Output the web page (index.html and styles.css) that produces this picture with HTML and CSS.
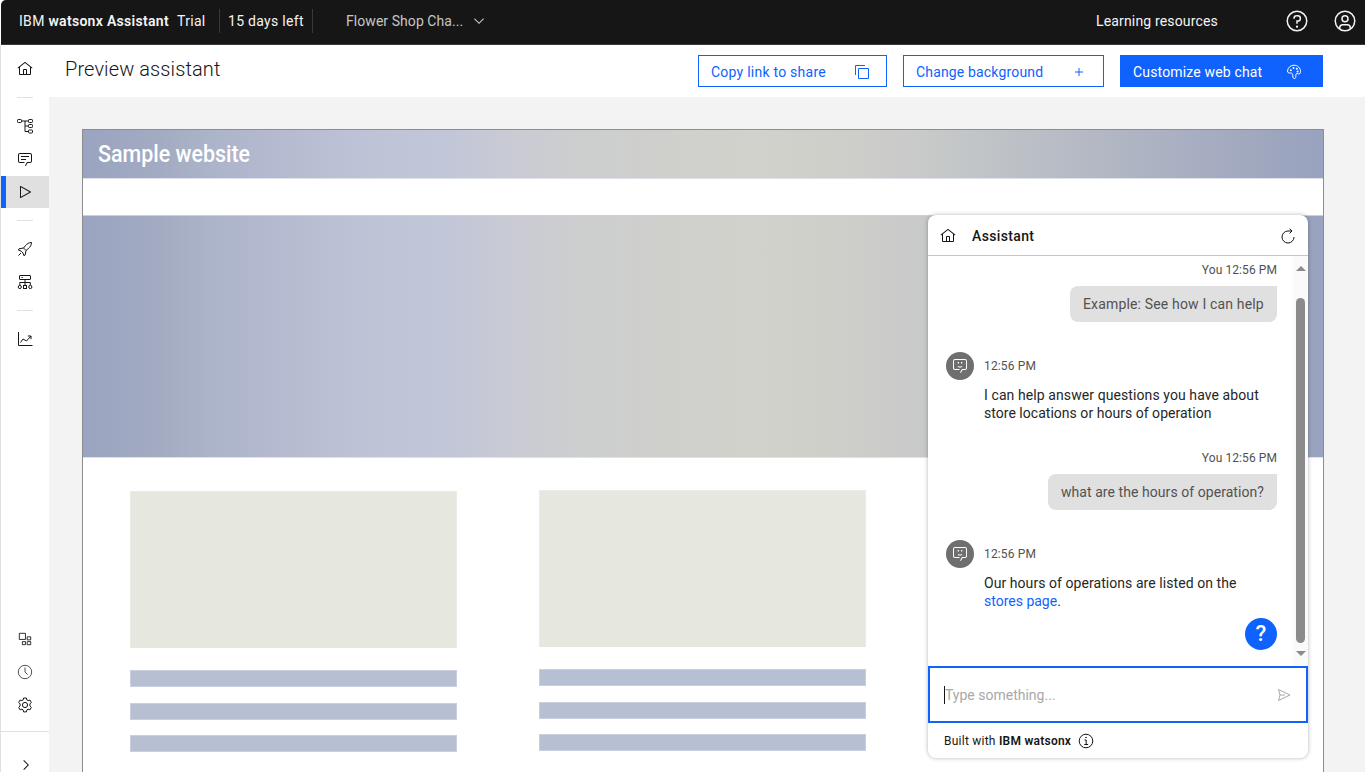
FILE: index.html
```html
<!DOCTYPE html>
<html lang="en">
<head>
<meta charset="utf-8">
<title>Preview assistant</title>
<link rel="stylesheet" href="styles.css">
</head>
<body>
<svg class="defs" width="0" height="0">
  <symbol id="home" viewBox="0 0 32 32"><path d="M16.6 2.2a1 1 0 0 0-1.2 0L1 13.4 2.2 15 4 13.6V26a2 2 0 0 0 2 2h20a2 2 0 0 0 2-2V13.6l1.8 1.4 1.2-1.6ZM18 26h-4v-8h4Zm2 0v-8a2 2 0 0 0-2-2h-4a2 2 0 0 0-2 2v8H6V12l10-7.8L26 12v14Z"/></symbol>
  <symbol id="bot" viewBox="0 0 32 32"><path d="M16 19a7 7 0 0 1-4.5-1.7l1.3-1.5a5 5 0 0 0 6.4 0l1.3 1.5A7 7 0 0 1 16 19Z"/><path d="M20.500 8H18v3h2.500V8Zm-9 0v3H14V8Z"/><path d="m17.7 30-1.7-1 4-7h6a2 2 0 0 0 2-2V6a2 2 0 0 0-2-2H6a2 2 0 0 0-2 2v14a2 2 0 0 0 2 2h9v2H6a4 4 0 0 1-4-4V6a4 4 0 0 1 4-4h20a4 4 0 0 1 4 4v14a4 4 0 0 1-4 4h-4.8Z"/></symbol>
</svg>
<header class="topbar">
  <span class="brand">IBM <b>watsonx Assistant</b></span>
  <span class="plan">Trial</span>
  <span class="days">15 days left</span>
  <span class="shop">Flower Shop Cha...</span>
  <svg class="chev" viewBox="0 0 16 16"><path d="M8 11 3 6l.7-.7L8 9.6l4.300-4.300.7.7z"/></svg>
  <span class="learn"><span>Learning resources</span></span>
  <svg class="topicon help" viewBox="0 0 32 32"><path d="M16 2a14 14 0 1 0 14 14A14 14 0 0 0 16 2Zm0 26a12 12 0 1 1 12-12 12 12 0 0 1-12 12Z"/><circle cx="16" cy="23.500" r="1.500"/><path d="M17 8h-1.500A4.500 4.500 0 0 0 11 12.500v.5h2v-.5a2.500 2.500 0 0 1 2.500-2.500H17a2.500 2.500 0 0 1 0 5h-2v4.500h2V17a4.500 4.500 0 0 0 0-9Z"/></svg>
  <svg class="topicon" viewBox="0 0 32 32"><path d="M16 8a5 5 0 1 0 5 5 5 5 0 0 0-5-5Zm0 8a3 3 0 1 1 3-3 3 3 0 0 1-3 3Z"/><path d="M16 2a14 14 0 1 0 14 14A14 14 0 0 0 16 2Zm-6 24.400V25a3 3 0 0 1 3-3h6a3 3 0 0 1 3 3v1.400a11.900 11.900 0 0 1-12 0Zm14-1.500A5 5 0 0 0 19 20h-6a5 5 0 0 0-5 4.900 12 12 0 1 1 16 0Z"/></svg>
</header>
<div class="shell">
  <nav class="rail">
    <a class="nav home"><svg viewBox="0 0 32 32"><use href="#home"/></svg></a>
    <i class="sep s1"></i>
    <a class="nav"><svg class="line" viewBox="0 0 16 16"><rect x=".5" y="1.500" width="4" height="3" rx=".8"/><rect x="11.500" y="1.500" width="4" height="3" rx=".8"/><rect x="11.500" y="6.500" width="4" height="3" rx=".8"/><rect x="11.500" y="12" width="4" height="3" rx=".8"/><path d="M4.500 3h7M8 3v10.500h3.500M8 8h3.500"/></svg></a>
    <a class="nav"><svg viewBox="0 0 32 32"><path d="M17.700 30 16 29l4-7h6a2 2 0 0 0 2-2V8a2 2 0 0 0-2-2H6a2 2 0 0 0-2 2v12a2 2 0 0 0 2 2h9v2H6a4 4 0 0 1-4-4V8a4 4 0 0 1 4-4h20a4 4 0 0 1 4 4v12a4 4 0 0 1-4 4h-4.800Z"/><path d="M8 10h16v2H8Zm0 6h10v2H8Z"/></svg></a>
    <a class="nav active"><svg viewBox="0 0 32 32"><path d="M7 28a1 1 0 0 1-1-1V5a1 1 0 0 1 1.500-.9l20 11a1 1 0 0 1 0 1.800l-20 11A1 1 0 0 1 7 28ZM8 6.700v18.600L24.900 16Z"/></svg></a>
    <i class="sep s2"></i>
    <a class="nav"><svg class="line" viewBox="0 0 16 16"><path d="M14.500 1.500c-2.500 0-4.500 1.200-6.200 3.300L6.500 7 2 7.800 1.300 9l3 1.200L6 12l.9 2.700 1.300-.7.8-4.500 2.200-1.800c2.100-1.700 3.300-3.700 3.300-6.200ZM6.500 7 9 9.500M4 12l-2.500 2.500"/></svg></a>
    <a class="nav"><svg class="line" viewBox="0 0 16 16"><rect x="2.500" y="1.500" width="11" height="4" rx=".5"/><path d="M4.500 3.500h1.300M8 5.500V11M2.800 11V8.500h10.500V11"/><circle cx="2.800" cy="13" r="1.600"/><rect x="6.500" y="11.500" width="3" height="3"/><circle cx="13.300" cy="13" r="1.600"/></svg></a>
    <i class="sep s3"></i>
    <a class="nav"><svg class="line" viewBox="0 0 16 16"><path d="M1.500 1v13.500h14M3.500 11.500 6 8l3.500 2L14 5M10.800 5H14v3.200"/></svg></a>
    <a class="nav low"><svg class="line small" viewBox="0 0 16 16"><path d="M1.500 1.500h7v7h-7zM10.500 5.500h4v3.500h-4zM5 11h3.500v3.500H5zM10.500 11h4v3.500h-4z"/></svg></a>
    <a class="nav"><svg class="line grey" viewBox="0 0 16 16"><circle cx="8" cy="8" r="6.700"/><path d="M8 3.500V8l2.700 2.700"/></svg></a>
    <a class="nav"><svg class="line" viewBox="0 0 16 16"><circle cx="8" cy="8" r="2.600"/><path d="M6.600 1h2.800l.4 1.900 1.300.7 1.800-.6 1.400 2.400L12.900 7v2l1.400 1.400-1.400 2.500-1.800-.7-1.300.8-.4 1.900H6.600L6.200 13l-1.300-.8-1.800.7-1.400-2.500L3.100 9V7L1.700 5.400 3.100 3l1.800.6 1.300-.7z"/></svg></a>
    <div class="expand"><svg viewBox="0 0 16 16"><path d="m11 8-5 5-.7-.7L9.600 8 5.300 3.700 6 3z"/></svg></div>
  </nav>
  <main class="main">
    <div class="toolbar">
      <h1>Preview assistant</h1>
      <button class="btn copy"><span>Copy link to share</span><svg class="line" viewBox="0 0 16 16"><path d="M4.500 4.500h10v10h-10zM1.500 11V1.500H11"/></svg></button>
      <button class="btn change"><span>Change background</span><svg class="line" viewBox="0 0 16 16"><path d="M8 4v8M4 8h8"/></svg></button>
      <button class="btn custom"><span>Customize web chat</span><svg class="line" viewBox="0 0 16 16"><path d="M8 1.200c3.800 0 6.500 2.900 6.500 6.300 0 2.200-1.400 3.200-2.600 2.200-1.200-.9-2-.1-2 1.200 0 2.200-.2 3.700-1.500 3.700s-1.600-1.200-1.600-2.600c0-2.400-.8-3.200-2.600-3C2.500 9.200 1.500 8.600 1.500 7 1.800 3.800 4.500 1.200 8 1.200Z"/><g class="dots"><circle cx="4.800" cy="6.300" r="1"/><circle cx="7.500" cy="4" r="1"/><circle cx="10.800" cy="4.800" r="1"/><circle cx="11.600" cy="7.600" r="1"/></g></svg></button>
    </div>
    <div class="stage">
      <div class="site">
        <div class="sitebar"><span>Sample website</span></div>
        <div class="hero"></div>
        <div class="cards">
          <div class="card"><div class="pic"></div><i></i><i></i><i></i></div>
          <div class="card second"><div class="pic"></div><i></i><i></i><i></i></div>
        </div>
      </div>
      <section class="chat">
        <div class="chathead">
          <svg viewBox="0 0 32 32"><use href="#home"/></svg><b>Assistant</b>
          <svg class="line reload" viewBox="0 0 16 16"><path d="M14 9a6 6 0 1 1-6-6h4M9.600.6 12 3 9.600 5.400"/></svg>
        </div>
        <div class="chatbody">
          <div class="messages">
            <div class="you"><span>You 12:56 PM</span></div>
            <div class="bubble b1"><span>Example: See how I can help</span></div>
            <div class="bot"><em><svg viewBox="0 0 32 32"><use href="#bot"/></svg></em><span>12:56 PM</span></div>
            <p class="reply"><span class="r1">I can help answer questions you have about</span><br><span class="r2">store locations or hours of operation</span></p>
            <div class="you later"><span>You 12:56 PM</span></div>
            <div class="bubble b2"><span>what are the hours of operation?</span></div>
            <div class="bot"><em><svg viewBox="0 0 32 32"><use href="#bot"/></svg></em><span>12:56 PM</span></div>
            <p class="reply"><span class="r3">Our hours of operations are listed on the</span><br><span class="r4"><a>stores page</a>.</span></p>
            <div class="fab">?</div>
          </div>
          <div class="scroll"><i class="up"></i><i class="thumb"></i><i class="down"></i></div>
        </div>
        <div class="input"><span>Type something...</span><svg class="line" viewBox="0 0 16 16"><path d="M2.500 2.500 14 8 2.500 13.500 4 8zM4 8h5"/></svg></div>
        <div class="foot"><span>Built with <b>IBM watsonx</b></span><svg class="line" viewBox="0 0 16 16"><circle cx="8" cy="8" r="6.800"/><path d="M6.500 7h1.700v4.500M6.300 11.500h3.800"/><circle cx="8" cy="4.600" r=".4"/></svg></div>
      </section>
    </div>
  </main>
</div>
</body>
</html>
```
FILE: styles.css
```css
*{box-sizing:border-box}
body{margin:0;width:1365px;height:772px;overflow:hidden;background:#fff;color:#161616;font:14px/18px Roboto,"Noto Sans",sans-serif;letter-spacing:.16px;display:flex;flex-direction:column}
svg{display:block;fill:currentColor;flex:none}
svg.line{fill:none;stroke:currentColor;stroke-width:1}
.defs{position:absolute}
span{white-space:nowrap}
i{display:block}
.topbar{height:45px;margin-left:1px;background:#161616;border-bottom:1px solid #393939;color:#f4f4f4;display:flex;align-items:center;padding:0 8px 2px 18px;border-top-left-radius:5px}
.brand{width:158px;letter-spacing:.3px}
.brand b{font-weight:600}
.plan{width:42px;letter-spacing:.3px}
.days{width:94px;height:24px;line-height:24px;border-left:1px solid #393939;border-right:1px solid #393939;padding-left:8px;letter-spacing:.3px}
.shop{color:#c6c6c6;margin-left:33px;width:125px;letter-spacing:.06px}
.chev{width:16px;height:16px;color:#c6c6c6}
.learn{margin-left:auto;width:189px}
.topicon{width:24px;height:24px}
.help{margin-right:24px}
.shell{flex:1;display:flex;min-height:0}
.rail{width:49px;border-left:1px solid #e0e0e0;display:flex;flex-direction:column;align-items:center;flex:none}
.nav{width:48px;height:32px;margin-bottom:1px;display:flex;align-items:center;justify-content:center;flex:none}
.nav svg{width:16px;height:16px}
.nav .small{width:14px;height:14px}
.grey{color:#525252}
.home{margin-top:8px;margin-bottom:0}
.sep{width:16px;height:1px;background:#e0e0e0;flex:none}
.s1{margin:12px 0}
.s2,.s3{margin:11px 0 12px}
.active{background:#e0e0e0;border-left:5px solid #0f62fe;padding-right:5px}
.low{margin-top:auto}
.expand{width:48px;height:41px;margin-top:9px;border-top:1px solid #e0e0e0;padding:25px 0 0 17px;flex:none}
.expand svg{width:16px;height:16px}
.main{flex:1;display:flex;flex-direction:column;min-width:0}
.toolbar{height:52px;flex:none;display:flex;align-items:flex-start;padding:10px 42px 0 16px;gap:16px}
h1{margin:0 auto 0 0;font-size:20px;line-height:28px;font-weight:300;letter-spacing:.1px}
.btn{height:32px;border:1px solid #0f62fe;background:#fff;color:#0f62fe;font:14px/18px Roboto,"Noto Sans",sans-serif;letter-spacing:.16px;display:flex;align-items:center;justify-content:space-between;padding:1px 16px 0 12px}
.btn svg{width:16px;height:16px}
.btn .dots{fill:currentColor;stroke:none}
.copy{width:189px}.copy span{letter-spacing:.24px}.change{width:201px}.custom{width:203px;background:#0f62fe;color:#fff;padding-right:20px}
.stage{flex:1;background:#f3f3f3;padding:32px 41px 0 33px;position:relative}
.site{height:100%;background:#fff;border:1px solid #8d8d8d;border-bottom:0}
.sitebar,.hero{background:linear-gradient(90deg,#9aa4c0 0%,#a3abc2 6%,#adb5ca 11%,#b4b9cf 15%,#bdc2d6 22%,#c1c6d8 29%,#cacbd3 35%,#cccecf 40%,#cfcfcd 46%,#d1d2cb 54%,#cfcfca 60%,#c9cac9 67%,#c1c5c8 72%,#b6bac4 80%,#a9afc2 89%,#9ea6be 96%,#99a2be 100%)}
.sitebar{height:49px;border-bottom:1px solid #dfe1ea;padding:9px 0 0 15px;color:#fff;font:500 23px/32px Roboto,sans-serif;letter-spacing:0}
.sitebar span{display:inline-block;transform:scaleX(.932);transform-origin:left}
.hero{height:243px;margin-top:36px;border-top:1px solid #ccd0de;border-bottom:1px solid #dfe1ea}
.cards{display:flex;gap:82px;padding:33px 0 0 47px}
.card{width:327px}
.second{margin-top:-1px}
.pic{height:157px;background:#e6e7de;border:1px solid #ebece4;border-bottom:0;margin-bottom:22px}
.card i{height:17px;background:#b7bfd3;border:1px solid #c9cfde;margin-bottom:15.500px}
.chat{position:absolute;left:879px;top:118px;width:380px;height:543px;background:#fff;border-radius:8px;box-shadow:0 0 4px rgba(0,0,0,.3);display:flex;flex-direction:column}
.chathead{height:41px;border-bottom:1px solid #c6c6c6;padding:1px 12px 0;display:flex;align-items:center;flex:none}
.chathead svg{width:16px;height:16px}
.chathead b{font-weight:500;letter-spacing:.35px;margin:0 auto 0 16px}
.chatbody{height:410px;display:flex;flex:none}
.messages{flex:1;padding:5px 16px 0 18px;display:flex;flex-direction:column}
.you{text-align:right;font-size:12px;color:#525252;height:18px;letter-spacing:.08px}
.bubble{height:36px;align-self:flex-end;margin-top:7px;background:#e0e0e0;color:#525252;border-radius:8px 0 8px 8px;padding:9px 13px}
.b1{width:207px}.b2{width:229px;letter-spacing:.06px}
.bot{display:flex;align-items:center;margin-top:30px;height:28px;font-size:12px;color:#525252;gap:10px}
.bot em{width:28px;height:28px;border-radius:50%;background:#6f6f6f;color:#fff;display:flex;align-items:center;justify-content:center}
.bot svg{width:16px;height:16px}
.reply{margin:6px 0 0 38px;color:#262626}
.reply a{color:#0f62fe}
.r1{letter-spacing:.09px}.r2{letter-spacing:.03px}.r3{letter-spacing:.06px}.r4{letter-spacing:0}
.later{margin-top:27px}
.fab{align-self:flex-end;width:32px;height:32px;margin-top:8px;border-radius:50%;background:#0f62fe;color:#fff;font:500 22px/32px Roboto,sans-serif;text-align:center;flex:none}
.scroll{width:15px;background:#fafafa;display:flex;flex-direction:column;align-items:center}
.up,.down{border:5px solid transparent;width:0;height:0}
.up{border-top:0;border-bottom:5px solid #8b8b8b;margin:10px 0 27px}
.thumb{width:9px;height:345px;border-radius:5px;background:#8b8b8b}
.down{border-bottom:0;border-top:5px solid #8b8b8b;margin-top:8px}
.input{height:57px;border:2px solid #0f62fe;display:flex;align-items:center;justify-content:space-between;padding:0 14px;color:#a8a8a8;flex:none}
.input span{border-left:1px solid #161616;letter-spacing:0}
.input svg{width:16px;height:16px}
.foot{flex:1;padding:0 16px;display:flex;align-items:center;gap:7px;font-size:12px;letter-spacing:.24px}
.foot b{font-weight:600}
.foot svg{width:16px;height:16px}
```
